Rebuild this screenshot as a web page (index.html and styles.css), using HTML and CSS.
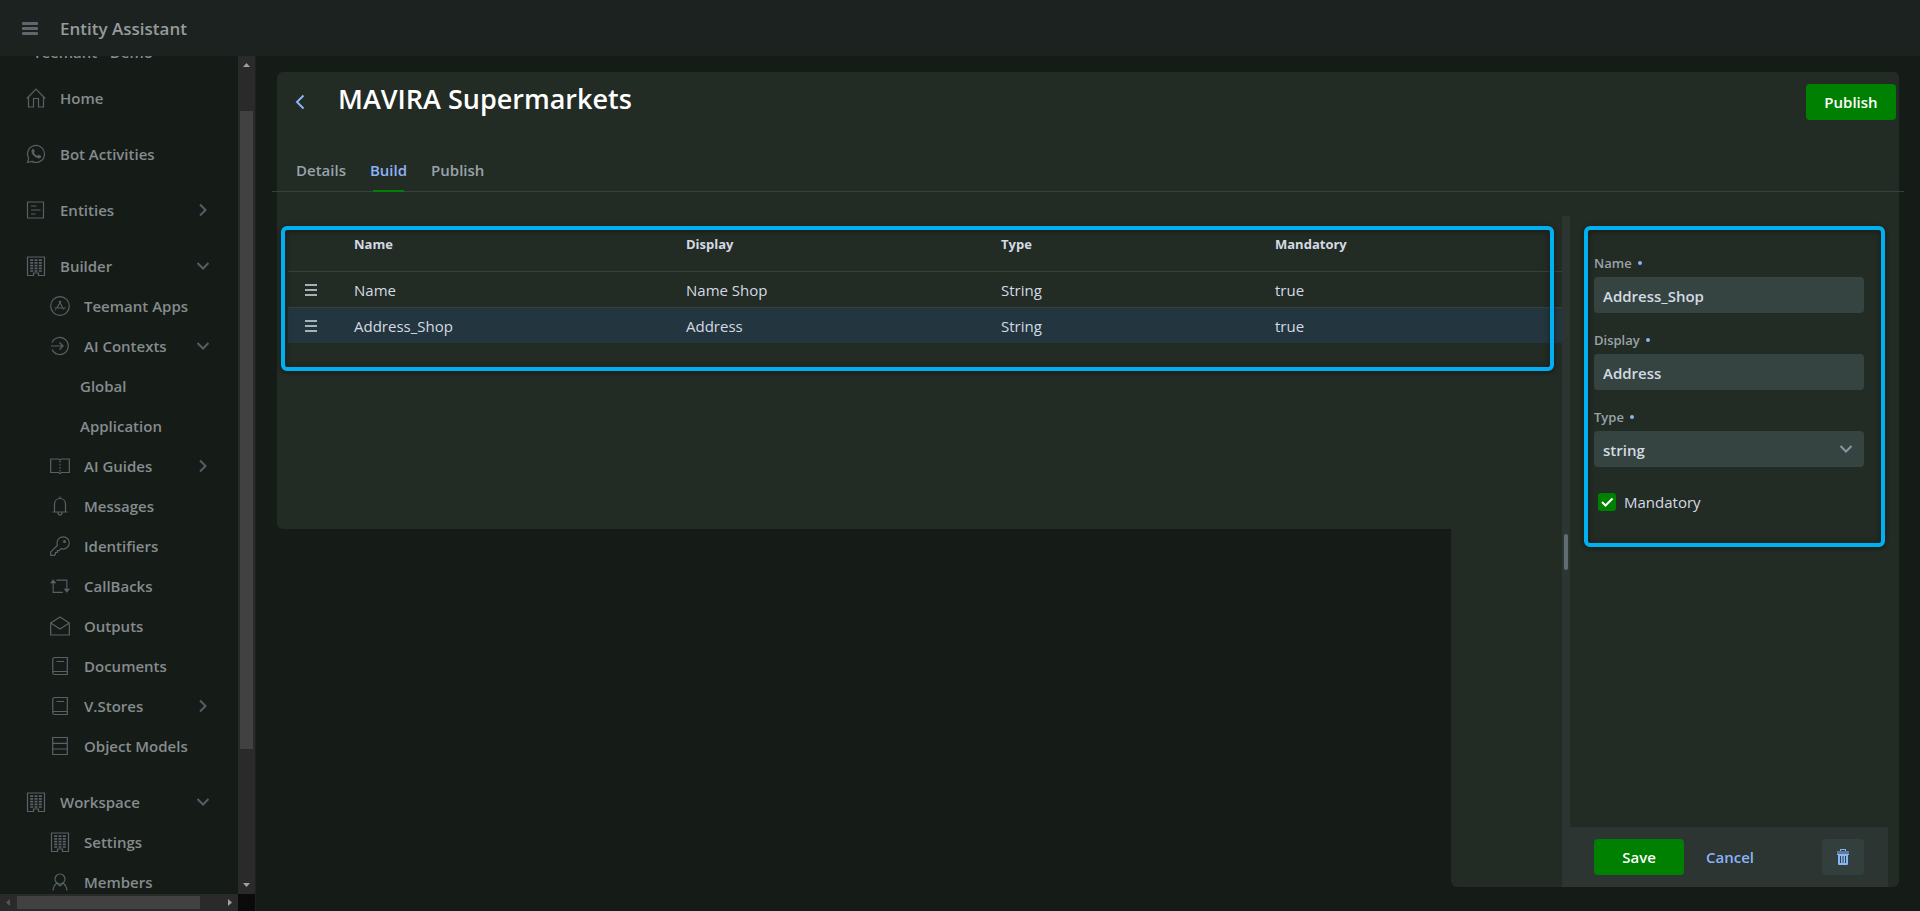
FILE: index.html
```html
<!DOCTYPE html>
<html lang="en">
<head>
    <meta charset="UTF-8">
    <meta name="viewport" content="width=device-width, initial-scale=1.0">
    <title>Entity Assistant</title>
    <link rel="stylesheet" href="styles.css">
</head>
<body>
    <!-- icon set -->
    <svg class="sprite" aria-hidden="true">
        <symbol id="i-home" viewBox="0 0 20 20"><path d="M.8 10.500 10 1.200l9.200 9.300M2.500 9v10h5v-8.500h5V19h5V9"/></symbol>
        <symbol id="i-whatsapp" viewBox="0 0 20 20"><path d="M1.500 18.500l1.200-4.200a8.500 8.500 0 1 1 3.200 3.100z"/><path class="fill" d="M6.200 5.400c.9-.8 1.500-.6 1.900.3l.6 1.400c.2.500-.1.900-.7 1.600.8 1.500 1.900 2.500 3.500 3.200.8-1.100 1.100-1.200 1.600-1l1.700.8c.6.300.5 1.300-.2 2-1 1-2.600.9-4.500-.1C7.500 12.200 5.900 10 5.600 8.300c-.2-1.300 0-2.200.6-2.900z"/></symbol>
        <symbol id="i-form" viewBox="0 0 20 20"><path d="M1.500 2h16v16h-16zM5 6h5.500M5 10h9.500M5 14h4.500"/></symbol>
        <symbol id="i-building" viewBox="0 0 20 20"><path d="M1.500 1h17v18.500h-6V17h-5v2.500h-6z"/><path d="M4.200 4.200h12M4.200 6.900h12M4.200 9.600h12M4.200 12.300h12M4.200 15h12" stroke-width="1.700" stroke-dasharray="3 1.300"/></symbol>
        <symbol id="i-appstore" viewBox="0 0 20 20"><circle cx="10" cy="10" r="9.300"/><path d="M9 5l4.700 8.500M11 5l-4.200 7M4.500 12h7.500M14 12h1.800M6 13.500l-.6 1"/></symbol>
        <symbol id="i-enter" viewBox="0 0 20 20"><path d="M2 6.500a8.500 8.500 0 1 1 0 7M1 10h12M9.500 6.500 13 10l-3.500 3.500"/></symbol>
        <symbol id="i-book-open" viewBox="0 0 20 20"><path d="M.7 3H8.500L10 4l1.500-1h7.800v13.500h-7.800L10 17.500l-1.500-1H.7z"/><path d="M10 5v12" stroke-dasharray="1.500 1.500"/></symbol>
        <symbol id="i-bell" viewBox="0 0 20 20"><path d="M2.500 16h15M4.500 16V8.500C4.500 4.800 7 2.500 10 2.500s5.500 2.300 5.500 6V16M10 .5v2M8 16.500c0 3.300 4 3.300 4 0"/></symbol>
        <symbol id="i-key" viewBox="0 0 20 20"><path d="M7.300 9.500C6 4.500 9 .8 13 .8s6.300 3 6.300 6.200c0 4-3.800 7-8.300 5.700l-2 2H7.300v1.800H5.500v1.700L4.300 19.300H.7v-3.400z"/><circle class="fill" cx="14.500" cy="5.500" r="1.500"/></symbol>
        <symbol id="i-repeat" viewBox="0 0 22 20"><path d="M3.500 6v11H14M7 3.500h11.500V15"/><path class="fill" d="M3.500 2.500 7 7H0zM18.500 17.500 22 13h-7z"/></symbol>
        <symbol id="i-mail" viewBox="0 0 20 20"><path d="M.7 7 10 1l9.300 6v12H.7zM.7 7l9.300 6 9.300-6"/></symbol>
        <symbol id="i-book" viewBox="0 0 20 20"><path d="M5 1.500h12.300v17H4.500A1.700 1.700 0 0 1 2.800 17V3.500c0-1.300.8-2 2.200-2zM3 15.500h14M6.500 5.500H14"/></symbol>
        <symbol id="i-rows" viewBox="0 0 20 20"><path d="M2.700 1.500h14.600v17H2.700zM2.700 7.300h14.600M2.700 13h14.600"/></symbol>
        <symbol id="i-person" viewBox="0 0 20 20"><circle cx="10" cy="7" r="5"/><path d="M3 18.500c.3-3.800 2-6 3.800-7.500L10 14l3.200-3c1.800 1.500 3.500 3.700 3.800 7.500"/></symbol>
        <symbol id="i-right" viewBox="0 0 14 14"><path d="M4 1.500 9.500 7 4 12.500"/></symbol>
        <symbol id="i-down" viewBox="0 0 14 14"><path d="M1.500 4 7 9.500 12.500 4"/></symbol>
    </svg>

    <header class="topbar">
        <button class="menu-btn" aria-label="Menu"><span></span><span></span><span></span></button>
        <span class="app-name">Entity Assistant</span>
    </header>

    <div class="layout">
        <aside class="sidebar">
            <nav class="nav">
                <div class="tenant">Teemant - Demo</div>
                <ul>
                    <li><a href="#"><svg class="icon"><use href="#i-home"/></svg>Home</a></li>
                    <li><a href="#"><svg class="icon"><use href="#i-whatsapp"/></svg>Bot Activities</a></li>
                    <li><a href="#"><svg class="icon"><use href="#i-form"/></svg>Entities<svg class="arrow"><use href="#i-right"/></svg></a></li>
                    <li>
                        <a href="#"><svg class="icon"><use href="#i-building"/></svg>Builder<svg class="arrow"><use href="#i-down"/></svg></a>
                        <ul class="sub">
                            <li><a href="#"><svg class="icon"><use href="#i-appstore"/></svg>Teemant Apps</a></li>
                            <li>
                                <a href="#"><svg class="icon"><use href="#i-enter"/></svg>AI Contexts<svg class="arrow"><use href="#i-down"/></svg></a>
                                <ul class="leaf">
                                    <li><a href="#">Global</a></li>
                                    <li><a href="#">Application</a></li>
                                </ul>
                            </li>
                            <li><a href="#"><svg class="icon"><use href="#i-book-open"/></svg>AI Guides<svg class="arrow"><use href="#i-right"/></svg></a></li>
                            <li><a href="#"><svg class="icon"><use href="#i-bell"/></svg>Messages</a></li>
                            <li><a href="#"><svg class="icon"><use href="#i-key"/></svg>Identifiers</a></li>
                            <li><a href="#"><svg class="icon"><use href="#i-repeat"/></svg>CallBacks</a></li>
                            <li><a href="#"><svg class="icon"><use href="#i-mail"/></svg>Outputs</a></li>
                            <li><a href="#"><svg class="icon"><use href="#i-book"/></svg>Documents</a></li>
                            <li><a href="#"><svg class="icon"><use href="#i-book"/></svg>V.Stores<svg class="arrow"><use href="#i-right"/></svg></a></li>
                            <li><a href="#"><svg class="icon"><use href="#i-rows"/></svg>Object Models</a></li>
                        </ul>
                    </li>
                    <li>
                        <a href="#"><svg class="icon"><use href="#i-building"/></svg>Workspace<svg class="arrow"><use href="#i-down"/></svg></a>
                        <ul class="sub">
                            <li><a href="#"><svg class="icon"><use href="#i-building"/></svg>Settings</a></li>
                            <li><a href="#"><svg class="icon"><use href="#i-person"/></svg>Members</a></li>
                        </ul>
                    </li>
                </ul>
            </nav>
            <div class="vbar">
                <svg viewBox="0 0 17 17"><path d="M5 11h7L8.500 7z"/></svg>
                <div class="vthumb"></div>
                <svg viewBox="0 0 17 17"><path d="M5 6h7l-3.500 4z"/></svg>
            </div>
            <div class="hbar">
                <svg class="off" viewBox="0 0 17 17"><path d="M10 5v7L6 8.500z"/></svg>
                <div class="hthumb"></div>
                <svg viewBox="0 0 17 17"><path d="M7 5v7l4-3.500z"/></svg>
            </div>
            <div class="corner"></div>
        </aside>

        <main class="main">
            <section class="card">
                <div class="card-head">
                    <button class="back" aria-label="Back"><svg viewBox="0 0 10 16"><path d="M8.500 1.500 2 8l6.500 6.500"/></svg></button>
                    <h1>MAVIRA Supermarkets</h1>
                    <button class="btn primary">Publish</button>
                </div>
                <nav class="tabs">
                    <a href="#">Details</a>
                    <a href="#" class="active">Build</a>
                    <a href="#">Publish</a>
                </nav>
                <div class="builder">
                    <div class="list">
                        <table>
                            <thead>
                                <tr><th class="c-drag"></th><th class="c-name">Name</th><th class="c-display">Display</th><th class="c-type">Type</th><th>Mandatory</th></tr>
                            </thead>
                            <tbody>
                                <tr>
                                    <td><svg class="drag" viewBox="0 0 14 14"><path d="M1 2h12M1 7h12M1 12h12"/></svg></td>
                                    <td>Name</td><td>Name Shop</td><td>String</td><td>true</td>
                                </tr>
                                <tr class="selected">
                                    <td><svg class="drag" viewBox="0 0 14 14"><path d="M1 2h12M1 7h12M1 12h12"/></svg></td>
                                    <td>Address_Shop</td><td>Address</td><td>String</td><td>true</td>
                                </tr>
                            </tbody>
                        </table>
                        <div class="frame frame-list"></div>
                    </div>
                    <div class="splitter"><span></span></div>
                    <form class="editor">
                        <div class="fields">
                            <label for="name">Name <i></i></label>
                            <input type="text" id="name" value="Address_Shop">
                            <label for="display">Display <i></i></label>
                            <input type="text" id="display" value="Address">
                            <label for="type">Type <i></i></label>
                            <div class="select">
                                <select id="type">
                                    <option>string</option>
                                </select>
                                <svg class="arrow"><use href="#i-down"/></svg>
                            </div>
                            <div class="check">
                                <span class="tick">
                                    <input type="checkbox" id="mandatory" checked>
                                    <svg viewBox="0 0 18 18"><path d="M4 9l3.500 3.500L14.500 5.500"/></svg>
                                </span>
                                <label for="mandatory">Mandatory</label>
                            </div>
                            <div class="frame frame-form"></div>
                        </div>
                        <div class="actions">
                            <button type="button" class="btn primary">Save</button>
                            <button type="button" class="btn flat">Cancel</button>
                            <button type="button" class="btn trash" aria-label="Delete">
                                <svg viewBox="0 0 12 16"><path d="M0 2.500h12v1H0zM3 2V.5C3 0 3.500 0 4 0h4c.5 0 1 0 1 .5V2H8V1H4v1zM0 4.500h12V6h-1v8.500c0 1-.5 1.500-1.500 1.500h-7C1.500 16 1 15.500 1 14.500V6H0z"/><path class="bars" d="M3.500 7v7M6 7v7M8.500 7v7"/></svg>
                            </button>
                        </div>
                    </form>
                </div>
            </section>
        </main>
    </div>
</body>
</html>
```

FILE: styles.css
```css
* {
    box-sizing: border-box;
}
body {
    margin: 0;
    height: 100vh;
    display: flex;
    flex-direction: column;
    overflow: hidden;
    background: #151b17;
    color: #d3dae3;
    font-family: "Open Sans", "Noto Sans", sans-serif;
    font-size: 15px;
    line-height: 20px;
}
button, input, select {
    font: inherit;
    color: inherit;
    border: none;
}
button {
    cursor: pointer;
    background: none;
    padding: 0;
}
a {
    color: inherit;
    text-decoration: none;
}
ul {
    list-style: none;
    margin: 0;
    padding: 0;
}
svg {
    fill: none;
    stroke: currentColor;
}
.sprite {
    position: absolute;
    width: 0;
    height: 0;
}
.fill {
    fill: currentColor;
    stroke: none;
}

/* top bar */
.topbar {
    flex: none;
    height: 56px;
    display: flex;
    align-items: center;
    gap: 22px;
    padding-left: 22px;
    background: #1c221f;
    color: #979b9d;
    position: relative;
}
.menu-btn {
    display: grid;
    gap: 2px;
    width: 16px;
}
.menu-btn span {
    height: 3px;
    border-radius: 1px;
    background: #5d676c;
}
.app-name {
    padding-top: 1px;
    font-size: 17px;
    font-weight: 600;
}

/* sidebar */
.layout {
    flex: 1;
    min-height: 0;
    display: flex;
}
.sidebar {
    flex: none;
    width: 256px;
    display: grid;
    grid-template-columns: 1fr 17px;
    grid-template-rows: minmax(0, 1fr) 17px;
    border-right: 1px solid #1c211e;
}
.nav {
    overflow: hidden;
    color: #868b8e;
    font-weight: 600;
}
.tenant {
    margin-top: -22px;
    padding: 8px 33px 16px;
}
.nav > ul > li {
    margin-bottom: 16px;
}
.nav a {
    display: flex;
    align-items: center;
    height: 40px;
    padding: 0 28px 0 26px;
}
.nav .sub a {
    padding-left: 50px;
}
.nav .leaf a {
    padding-left: 80px;
}
.icon {
    width: 20px;
    height: 20px;
    margin-right: 14px;
    color: #596167;
    stroke-width: 1.2;
}
.arrow {
    width: 14px;
    height: 14px;
    margin-left: auto;
    color: #535e66;
    stroke-width: 2;
}
.vbar, .hbar {
    display: flex;
    background: #2a2a2a;
}
.vbar {
    flex-direction: column;
    align-items: center;
}
.hbar {
    align-items: center;
}
.vbar svg, .hbar svg {
    flex: none;
    width: 17px;
    height: 17px;
    fill: #a0a0a0;
    stroke: none;
}
.hbar .off {
    fill: #555;
}
.vthumb {
    width: 13px;
    height: 638px;
    margin: 38px 0 auto;
    background: #424142;
}
.hthumb {
    height: 13px;
    width: 183px;
    margin-right: auto;
    background: #424142;
}
.corner {
    background: #0b0b0b;
}

/* card */
.main {
    flex: 1;
    display: flex;
    padding: 16px 21px 24px;
}
.card {
    flex: 1;
    display: flex;
    flex-direction: column;
    position: relative;
    isolation: isolate;
}
/* the card surface stops early on the left and runs to the bottom on the right */
.card::before, .card::after {
    content: "";
    position: absolute;
    z-index: -1;
    top: 0;
    right: 0;
    background: #232b25;
    border-radius: 6px;
}
.card::before {
    left: 0;
    bottom: 358px;
}
.card::after {
    bottom: 0;
    width: 448px;
}
.card-head {
    display: flex;
    align-items: flex-start;
    padding: 12px 3px 0 17px;
    height: 80px;
}
.back {
    width: 16px;
    height: 36px;
    margin-right: 28px;
    color: #8ab4f8;
    text-align: left;
}
.back svg {
    display: block;
    width: 12px;
    height: 16px;
    stroke-width: 2;
}
h1 {
    flex: 1;
    margin: 0;
    color: #fff;
    font-size: 27px;
    font-weight: 600;
    line-height: 30px;
}
.btn {
    height: 36px;
    border-radius: 4px;
    font-weight: 600;
}
.primary {
    width: 90px;
    background: #008000;
    color: #fff;
}
.tabs {
    display: flex;
    gap: 24px;
    margin: 0 -5px;
    padding: 0 24px;
    height: 40px;
    border-bottom: 1px solid #33413f;
    color: #98a3ab;
    font-weight: 600;
}
.tabs a {
    position: relative;
    padding-top: 8px;
}
.tabs .active {
    color: #8ab4f8;
}
.tabs .active::after {
    content: "";
    position: absolute;
    left: 3px;
    right: 3px;
    bottom: -1px;
    height: 2px;
    background: #008000;
}
.builder {
    flex: 1;
    display: grid;
    grid-template-columns: minmax(0, 1fr) 8px 318px;
    margin: 24px 11px 0 0;
}
.list {
    position: relative;
    padding: 12px 0 0 11px;
}
table {
    width: 100%;
    table-layout: fixed;
    border-collapse: collapse;
    text-align: left;
}
th {
    height: 43px;
    padding: 6px 0 0;
    vertical-align: top;
    font-size: 13px;
    font-weight: 700;
}
td {
    height: 36px;
    padding: 2px 0 0;
    border-top: 1px solid #33413f;
}
.c-drag {
    width: 66px;
}
.c-name {
    width: 332px;
}
.c-display {
    width: 315px;
}
.c-type {
    width: 274px;
}
.selected {
    background: #23363f;
}
.drag {
    display: block;
    width: 14px;
    height: 14px;
    margin-left: 16px;
    stroke-width: 1.5;
}
.frame {
    position: absolute;
    pointer-events: none;
    border: 4px solid #00b0f0;
    border-radius: 6px;
    box-shadow: 0 1px 5px rgba(0, 0, 0, .45), inset 0 1px 6px rgba(0, 0, 0, .4);
}
.frame-list {
    top: 10px;
    left: 4px;
    right: 8px;
    height: 145px;
}
.frame-form {
    top: 10px;
    left: 14px;
    right: 3px;
    height: 321px;
}
.splitter {
    display: flex;
    align-items: center;
    justify-content: center;
    background: #2c3531;
}
.splitter span {
    width: 4px;
    height: 36px;
    border-radius: 2px;
    background: #5f6d73;
}

/* field editor */
.editor {
    display: flex;
    flex-direction: column;
}
.fields {
    flex: 1;
    position: relative;
    padding: 37px 24px 0;
}
.fields > label {
    display: flex;
    align-items: center;
    gap: 6px;
    height: 24px;
    padding-bottom: 4px;
    color: #98a3ab;
    font-size: 13px;
    font-weight: 600;
}
.fields label i {
    width: 4px;
    height: 4px;
    border-radius: 2px;
    background: #8ab4f8;
}
.fields input[type="text"], .select select {
    display: block;
    width: 100%;
    height: 36px;
    margin-bottom: 17px;
    padding: 2px 9px 0;
    border-radius: 4px;
    background: #364441;
    font-weight: 600;
    appearance: none;
}
.select {
    position: relative;
}
.select .arrow {
    position: absolute;
    top: 11px;
    right: 11px;
    color: #8a96a3;
    pointer-events: none;
}
.check {
    display: flex;
    align-items: center;
    gap: 8px;
    padding: 8px 4px;
}
.tick {
    position: relative;
    width: 18px;
    height: 18px;
}
.tick input {
    display: block;
    width: 18px;
    height: 18px;
    margin: 0;
    appearance: none;
    border-radius: 3px;
    background: #008000;
}
.tick svg {
    position: absolute;
    inset: 0;
    color: #fff;
    stroke-width: 2;
    pointer-events: none;
}
.actions {
    display: flex;
    align-items: center;
    height: 60px;
    padding: 0 24px;
    background: #2c3531;
}
.flat {
    margin-left: 22px;
    color: #8ab4f8;
}
.trash {
    display: flex;
    align-items: center;
    justify-content: center;
    width: 42px;
    margin-left: auto;
    background: #333f3c;
}
.trash svg {
    width: 12px;
    height: 16px;
    fill: #8ab4f8;
    stroke: none;
}
.trash .bars {
    stroke: #333f3c;
}
```
